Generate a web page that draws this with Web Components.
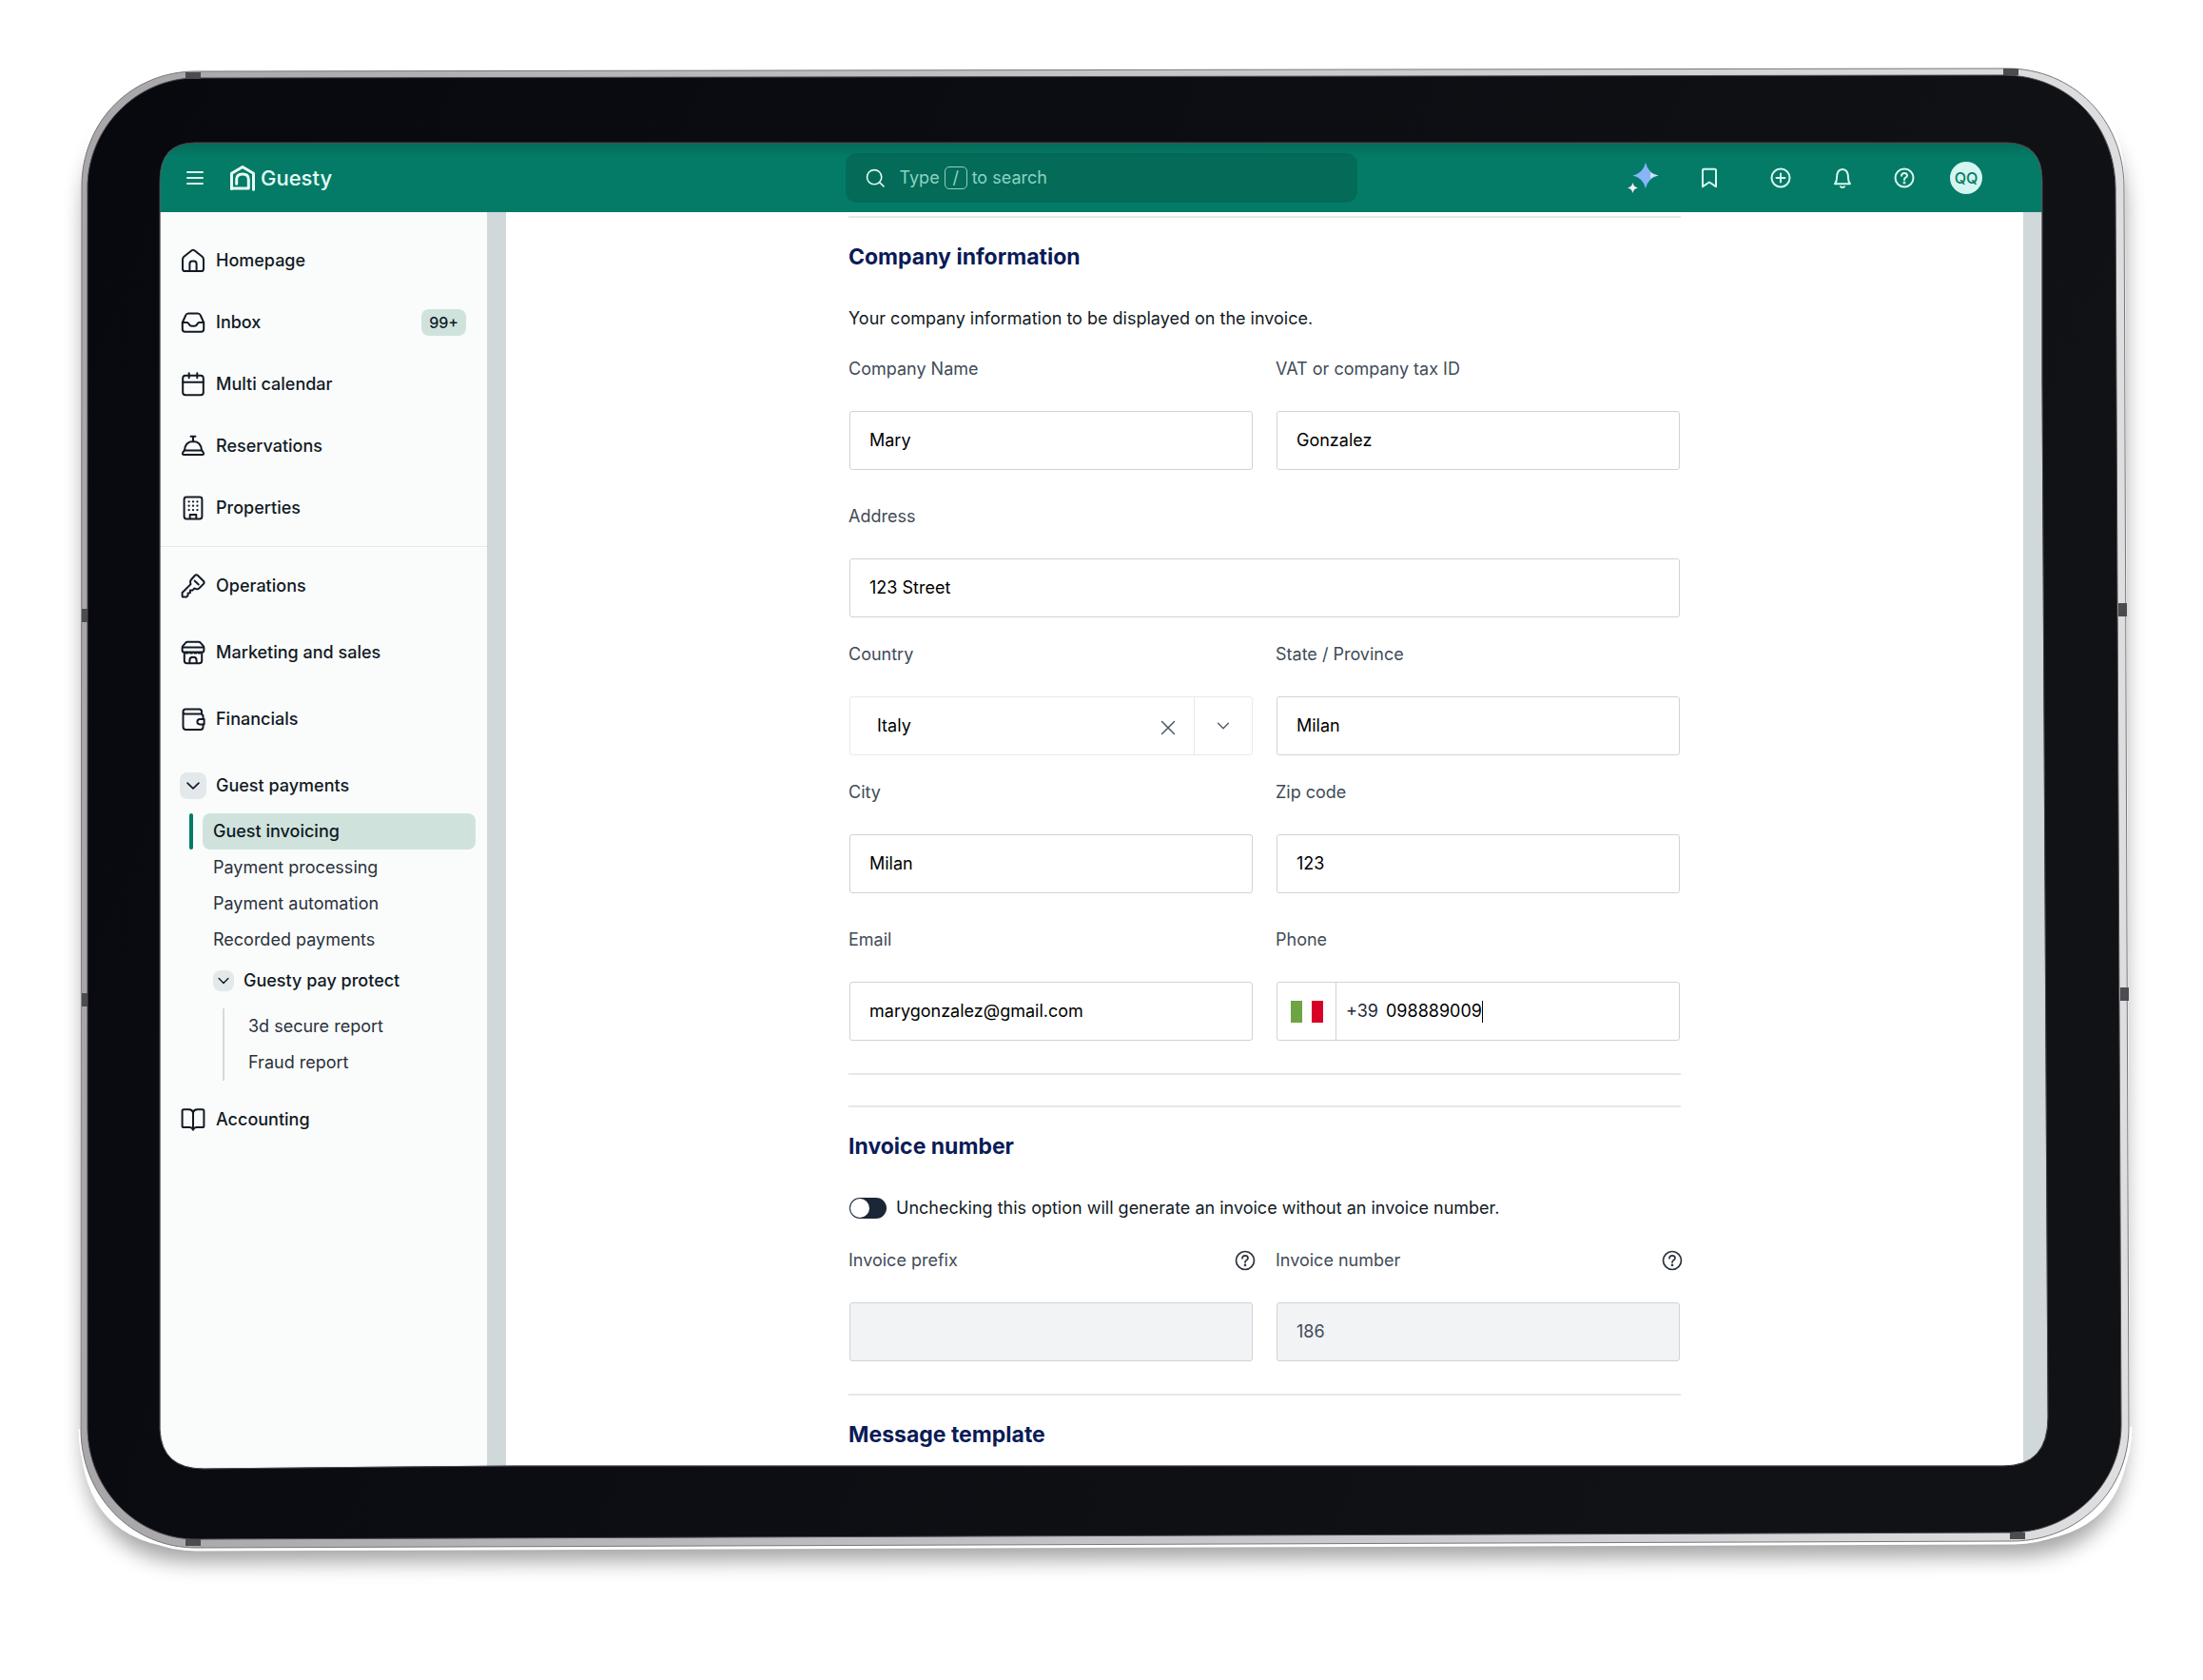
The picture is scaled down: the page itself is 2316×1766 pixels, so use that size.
<!DOCTYPE html>
<html lang="en">
<head>
<meta charset="utf-8">
<meta name="viewport" content="width=device-width, initial-scale=1">
<title>Guesty - Guest invoicing</title>
<style>
	html, body {
		margin: 0;
		height: 100%;
		background: #fff;
	}
	body {
		font-family: Inter, "Liberation Sans", sans-serif;
		font-size: 18px;
		line-height: 28px;
		color: #111a24;
		--green: #047b66;
		--mint: #cfe3dc;
		--line: #e5e7ea;
		--field-line: #d0d3d6;
		--track: #d1d8da;
	}
</style>
</head>
<body>

<tablet-frame>
	<app-header slot="screen"></app-header>

	<side-nav slot="screen">
		<nav-item icon="home">Homepage</nav-item>
		<nav-item icon="inbox" badge="99+">Inbox</nav-item>
		<nav-item icon="calendar">Multi calendar</nav-item>
		<nav-item icon="bell-desk">Reservations</nav-item>
		<nav-item icon="building">Properties</nav-item>
		<nav-item slot="tools" icon="key">Operations</nav-item>
		<nav-item slot="tools" icon="store">Marketing and sales</nav-item>
		<nav-item slot="tools" icon="wallet">Financials</nav-item>
		<nav-group slot="tools" label="Guest payments">
			<nav-link active>Guest invoicing</nav-link>
			<nav-link>Payment processing</nav-link>
			<nav-link>Payment automation</nav-link>
			<nav-link>Recorded payments</nav-link>
			<nav-group nested label="Guesty pay protect">
				<nav-link>3d secure report</nav-link>
				<nav-link>Fraud report</nav-link>
			</nav-group>
		</nav-group>
		<nav-item slot="tools" icon="book">Accounting</nav-item>
	</side-nav>

	<invoice-page slot="screen">
		<form-section heading="Company information">
			<p>Your company information to be displayed on the invoice.</p>
			<field-row>
				<text-field label="Company Name" value="Mary"></text-field>
				<text-field label="VAT or company tax ID" value="Gonzalez"></text-field>
			</field-row>
			<field-row space="wide">
				<text-field label="Address" value="123 Street"></text-field>
			</field-row>
			<field-row space="narrow">
				<select-field label="Country" value="Italy"></select-field>
				<text-field label="State / Province" value="Milan"></text-field>
			</field-row>
			<field-row space="narrow">
				<text-field label="City" value="Milan"></text-field>
				<text-field label="Zip code" value="123"></text-field>
			</field-row>
			<field-row space="wide">
				<text-field label="Email" type="email" value="marygonzalez@gmail.com"></text-field>
				<phone-field label="Phone" prefix="+39" value="098889009"></phone-field>
			</field-row>
		</form-section>
		<form-section heading="Invoice number" spaced>
			<toggle-switch>Unchecking this option will generate an invoice without an invoice number.</toggle-switch>
			<field-row>
				<text-field label="Invoice prefix" value="" help disabled></text-field>
				<text-field label="Invoice number" value="186" help disabled></text-field>
			</field-row>
		</form-section>
		<form-section heading="Message template"></form-section>
	</invoice-page>
</tablet-frame>

<script>
/**
 * Icon shapes, drawn on a 26 x 26 grid.
 */
const ICONS = {
	'menu': '<path d="M5 7h16M5 13h16M5 19h16"/>',
	'home': '<path d="M11.6 2.300 3.400 8.800Q2 10 2 12v9.400Q2 24 4.600 24h16.800q2.600 0 2.600-2.600V12q0-2-1.400-3.200l-8.200-6.500q-1.400-1-2.800 0Z"/><path d="M9.400 24v-7.600q0-2.900 2.600-2.900h2q2.600 0 2.600 2.900V24"/>',
	'inbox': '<path d="M1.800 13v7q0 2.700 2.700 2.700h17q2.700 0 2.700-2.700v-7L20.800 5.500q-.8-2-2.900-2H8.100q-2.100 0-2.900 2Z"/><path d="M1.800 13h4.700q1.300 0 2 1.500 1 2.200 3 2.200h3q2 0 3-2.200.7-1.500 2-1.500h4.700"/>',
	'calendar': '<rect x="2.200" y="3.800" width="21.600" height="20.400" rx="2.800"/><path d="M2.200 10.800h21.600M8.700 1.200v5M17.300 1.200v5"/>',
	'bell-desk': '<path d="M3.600 17.400h18.800l1.500 2.600q.8 2-1.400 2H3.500q-2.200 0-1.400-2Z"/><path d="M4 17.400q.6-9.200 9-9.400 8.400.2 9 9.400M13 8V3M10.600 2.800h4.800"/>',
	'building': '<rect x="3.600" y="1.500" width="18.800" height="23" rx="2.400"/><path d="M9.700 24v-4h6.600v4"/><path stroke-width="2.200" d="M8.600 6.300h.1M13 6.300h.1M17.400 6.300h.1M8.600 10.700h.1M13 10.700h.1M17.400 10.700h.1M8.600 15.100h.1M13 15.100h.1M17.400 15.100h.1"/>',
	'key': '<path d="M14.800 2q1.600-1.400 3.200 0l5.900 5.700q1.400 1.600 0 3.200l-4.700 4.600q-1.400 1.300-3.200.6l-1.600-.7-2 2.200-2.400-.1-.1 2.700-2.300.2-.1 2.600-1.500 1.600H2.800q-1.200 0-1.200-1.200v-3.400l8.900-8.900-.4-1.800q-.4-1.600.8-2.800Z"/><path d="m14.600 7.600 4.200 3.800"/>',
	'store': '<path d="M7.300 1.800h11.400q1.400 0 2.300 1l2.600 3q.8 1 .8 2.200v2.400q0 2.200-2.600 2.200H4.200q-2.600 0-2.600-2.200V8q0-1.200.8-2.200l2.600-3q.9-1 2.300-1Z"/><path d="M2.200 7.600h21.600M3.800 13v8.400q0 2.800 2.800 2.800h12.800q2.800 0 2.800-2.800V13"/><path d="M9.400 24v-3q0-3.200 3.600-3.200t3.600 3.200v3"/><path d="M5.600 13.400h2M10 13.400h2M14.400 13.400h2M18.600 13.400h1.600"/>',
	'wallet': '<path d="M22 7.500V5q0-2.500-2.500-2.500H5Q2.500 2.500 2.500 5v15.800Q2.500 24 5.600 24h15.200q2.700 0 2.700-2.700v-2.800M23.500 13v-3q0-2.500-2.500-2.500H5Q2.500 7.500 2.500 5"/><path d="M24.600 13h-4.400q-2.800.2-2.800 2.700t2.800 2.700h4.400Z"/>',
	'book': '<path d="M13 5.600Q12.200 2.200 8.600 2.200H3.200q-1.600 0-1.600 1.600v15.600q0 1.600 1.600 1.600h6q3 0 3.800 2.800.8-2.800 3.800-2.800h6q1.600 0 1.600-1.600V3.800q0-1.600-1.600-1.600h-5.400Q13.800 2.200 13 5.600Zm0 0v18.200"/>',
	'chevron': '<path d="m6 9.500 7 7 7-7"/>',
	'search': '<circle cx="12" cy="12" r="9"/><path d="m18.600 18.600 5 5"/>',
	'bookmark': '<path d="M6 5q0-1.300 1.300-1.300h11.400Q20 3.700 20 5v17.200l-7-4.700-7 4.700Z"/>',
	'plus': '<circle cx="13" cy="13" r="9.500"/><path d="M13 8.500v9M8.500 13h9"/>',
	'bell': '<path d="M5 19.300h16q-2-2.500-2-6 0-9.300-6-9.300t-6 9.300q0 3.500-2 6Z"/><path d="M11 22.300q2 1.500 4 0"/>',
	'help': '<circle cx="13" cy="13" r="9.500"/><path d="M10 10.800q.2-2.900 3-2.900t3 2.500q0 1.500-1.600 2.300Q13 13.400 13 15"/><circle cx="13" cy="17.900" r=".5" fill="currentColor"/>',
	'close': '<path d="m6 6 14 14M20 6 6 20"/>',
	'logo': '<path d="M1.500 24.500V8.300L13 1.500l11.500 6.800v17"/><path d="M1.500 24h17.800v-9.500q0-5.600-6.300-5.600t-6.300 5.600v4.800"/>',
	'sparkle': '<g stroke="none"><path fill="#8ab4f8" d="M16-3q2.600 11 13.500 13.500Q18.600 13 16 24q-2.600-11-13.500-13.500Q13.400 8 16-3Z"/><path fill="#cfe6f7" d="M21 7.600q3.400 2.100 8.500 2.900-5.100.8-8.500 2.900Z"/><path fill="#f4eef8" d="M2.500 18q.9 4.600 5.500 5.500-4.600.9-5.500 5.500-.9-4.600-5.500-5.500 4.600-.9 5.500-5.500Z"/></g>'
};

/**
 * Shared base: opens a shadow root and fills it from render().
 */
class BaseElement extends HTMLElement {
	constructor() {
		super();
		this.shadow = this.attachShadow({ mode: 'open' });
	}

	connectedCallback() {
		this.shadow.innerHTML = this.render();
	}

	/**
	 * @param {string} name
	 * @returns {string} attribute value or empty string
	 */
	attr(name) {
		return this.getAttribute(name) || '';
	}
}

class AppIcon extends BaseElement {
	render() {
		return `
    <style>
        :host {
          display: block;
          flex: none;
          width: var(--size, 26px);
          height: var(--size, 26px);
        }
        svg {
          display: block;
          width: 100%;
          height: 100%;
          overflow: visible;
          fill: none;
          stroke: currentColor;
          stroke-width: var(--stroke, 2);
          stroke-linecap: round;
          stroke-linejoin: round;
        }
    </style>
    <svg viewBox="0 0 26 26" aria-hidden="true">${ICONS[this.attr('name')] || ''}</svg>`;
	}
}

/**
 * Tablet body drawn over the edges of the screen area.
 */
class TabletFrame extends BaseElement {
	render() {
		return `
    <style>
        :host {
          display: grid;
          position: relative;
          box-sizing: border-box;
          min-height: 100vh;
          padding: 150px 163px 222px 168px;
        }
        .screen {
          display: grid;
          grid-template: 73px 1fr / 344px 1fr;
          min-height: 0;
          height: calc(100vh - 372px);
          overflow: hidden;
          background: #fff;
        }
        svg {
          position: absolute;
          inset: 0;
          width: 100%;
          height: 100%;
          pointer-events: none;
        }
    </style>
    <div class="screen"><slot name="screen"></slot></div>
    <svg viewBox="0 0 2316 1766" preserveAspectRatio="none" aria-hidden="true">
      <defs>
        <filter id="shade" x="-5%" y="-5%" width="110%" height="112%">
          <feGaussianBlur stdDeviation="11"/>
        </filter>
        <linearGradient id="rim" x1="0" x2="1">
          <stop offset="0" stop-color="#a9a6aa"/>
          <stop offset=".5" stop-color="#c6c4c8"/>
          <stop offset="1" stop-color="#dedde0"/>
        </linearGradient>
        <linearGradient id="glass" x1="0" x2="1" y2=".3">
          <stop offset="0" stop-color="#07090f"/>
          <stop offset="1" stop-color="#111216"/>
        </linearGradient>
        <linearGradient id="fade" x1="0" x2="0" y1="0" y2="1">
          <stop offset="0" stop-opacity=".13"/>
          <stop offset="1" stop-opacity="0"/>
        </linearGradient>
        <clipPath id="outside">
          <path clip-rule="evenodd" d="M0 0H2316V1766H0ZM206 76 2110 73Q2232 73 2234 195L2239 1500Q2239 1620 2117 1621L206 1628Q84 1628 84 1502L86 196Q86 76 206 76Z"/>
        </clipPath>
      </defs>
      <g clip-path="url(#outside)">
        <path fill="#000" opacity=".36" filter="url(#shade)" d="M210 110H2110Q2232 110 2234 220V1515Q2234 1635 2114 1636L206 1642Q88 1642 88 1512V230Q88 110 210 110Z"/>
      </g>
      <path fill="none" stroke="#fff" stroke-width="3" d="M84 1502C84 1573 138 1629 206 1629L2117 1622C2187 1621 2240 1567 2240 1500"/>
      <path fill="url(#rim)" fill-rule="evenodd" stroke="#77767a" stroke-width="1" d="M206 75 2110 72C2180 72 2232 126 2233 195L2238 1500C2238 1566 2186 1619 2117 1620L206 1627C138 1627 85 1572 85 1502L86 196C86 128 138 75 206 75ZM205 150Q168 150 168 190V1503Q170 1544 214 1544L420 1542 540 1541H2106Q2153 1541 2153 1490L2147 400V190Q2147 150 2109 150Z"/>
      <path fill="url(#glass)" fill-rule="evenodd" stroke="#4a494d" stroke-width="1" d="M206 82 2108 79C2174 80 2223 130 2224 197L2230 1498C2230 1560 2178 1610 2115 1611L206 1618C144 1618 92 1566 92 1500V198C92 134 144 82 206 82ZM205 150Q168 150 168 190V1503Q170 1544 214 1544L420 1542 540 1541H2106Q2153 1541 2153 1490L2147 400V190Q2147 150 2109 150Z"/>
      <path fill="url(#fade)" d="M205 150H2109Q2128 150 2137 160V166H177V160Q186 150 205 150Z"/>
      <path fill="#4c4b4f" d="M195 76h16v7h-16ZM2106 72h16v7h-16ZM195 1618h16v7h-16ZM2113 1611h16v7h-16ZM86 640h6v14h-6ZM86 1044h6v14h-6ZM2227 634h9v14h-9ZM2229 1038h9v14h-9Z"/>
    </svg>`;
	}
}

class AppHeader extends BaseElement {
	render() {
		return `
    <style>
        :host {
          display: block;
          grid-column: 1 / -1;
          background: var(--green);
          color: #d9f7ef;
        }
        header {
          display: flex;
          align-items: center;
          box-sizing: border-box;
          height: 100%;
          padding-right: 6px;
        }
        .brand, .actions {
          flex: 1 1 0;
          display: flex;
          align-items: center;
        }
        .brand {
          gap: 24px;
        }
        .brand::before {
          content: "";
        }
        .actions {
          justify-content: flex-end;
          gap: 31px;
        }
        .actions::after {
          content: "";
          width: 32px;
        }
        button {
          display: flex;
          justify-content: center;
          width: 34px;
          padding: 0;
          border: 0;
          background: none;
          color: inherit;
        }
        button.menu {
          width: 26px;
        }
        button.spark {
          margin-right: 5px;
        }
        button.mark {
          margin-right: 10px;
        }
        button.user {
          align-items: center;
          height: 34px;
          border-radius: 50%;
          background: #d5f5f0;
          color: var(--green);
          font: 500 16px/34px Inter, sans-serif;
        }
        a {
          display: flex;
          align-items: center;
          gap: 6px;
          color: #e6fbf6;
          font-size: 22px;
          font-weight: 500;
          text-decoration: none;
          --stroke: 3;
        }
        label {
          flex: 0 1 538px;
          display: flex;
          align-items: center;
          box-sizing: border-box;
          height: 52px;
          padding: 0 20px;
          border-radius: 12px;
          background: #036b58;
          color: #8bd3c2;
        }
        label app-icon {
          --size: 22px;
          margin-right: 15px;
          color: #d9f7ef;
        }
        kbd {
          box-sizing: border-box;
          width: 24px;
          margin: 0 5px;
          border: 1px solid #8bd3c2;
          border-radius: 5px;
          font: inherit;
          line-height: 22px;
          text-align: center;
        }
        input {
          flex: 1;
          min-width: 0;
          border: 0;
          outline: 0;
          background: none;
          color: inherit;
          font: inherit;
        }
    </style>
    <header>
      <div class="brand">
        <button class="menu" type="button" aria-label="Menu"><app-icon name="menu"></app-icon></button>
        <a href="#"><app-icon name="logo"></app-icon>Guesty</a>
      </div>
      <label>
        <app-icon name="search"></app-icon>
        <span>Type</span><kbd>/</kbd><span>to search</span>
        <input type="search">
      </label>
      <div class="actions">
        <button class="spark" type="button" aria-label="Assistant"><app-icon name="sparkle"></app-icon></button>
        <button class="mark" type="button" aria-label="Bookmarks"><app-icon name="bookmark"></app-icon></button>
        <button type="button" aria-label="Add"><app-icon name="plus"></app-icon></button>
        <button type="button" aria-label="Notifications"><app-icon name="bell"></app-icon></button>
        <button type="button" aria-label="Help"><app-icon name="help"></app-icon></button>
        <button class="user" type="button">QQ</button>
      </div>
    </header>`;
	}
}

class SideNav extends BaseElement {
	render() {
		return `
    <style>
        :host {
          display: block;
          min-height: 0;
          overflow: hidden;
          background: #fafbfb;
        }
        .main {
          padding: 18px 0 8px;
          border-bottom: 1px solid var(--line);
          --row: 65px;
        }
        .tools {
          display: flex;
          flex-direction: column;
          gap: 12px;
          padding-top: 12px;
          --row: 58px;
        }
    </style>
    <nav>
      <div class="main"><slot></slot></div>
      <div class="tools"><slot name="tools"></slot></div>
    </nav>`;
	}
}

class NavItem extends BaseElement {
	render() {
		const badge = this.attr('badge');
		return `
    <style>
        :host {
          display: block;
        }
        a {
          display: flex;
          align-items: center;
          gap: 11px;
          height: var(--row);
          padding: 0 22px;
          color: inherit;
          font-weight: 500;
          text-decoration: none;
        }
        .badge {
          margin-left: auto;
          padding: 0 8px;
          border-radius: 8px;
          background: var(--mint);
          font-size: 16px;
        }
    </style>
    <a href="#">
      <app-icon name="${this.attr('icon')}"></app-icon>
      <slot></slot>
      ${badge ? `<span class="badge">${badge}</span>` : ''}
    </a>`;
	}
}

class NavLink extends BaseElement {
	render() {
		return `
    <style>
        :host {
          display: flex;
          gap: 10px;
          height: 38px;
        }
        :host::before {
          content: "";
          width: 4px;
          border-radius: 2px;
        }
        :host([active])::before {
          background: var(--green);
        }
        a {
          flex: 1;
          padding-left: 11px;
          border-radius: 8px;
          color: #2a323c;
          line-height: 38px;
          text-decoration: none;
        }
        :host([active]) a {
          background: var(--mint);
          color: #111a24;
          font-weight: 500;
        }
    </style>
    <a href="#"><slot></slot></a>`;
	}
}

class NavGroup extends BaseElement {
	render() {
		return `
    <style>
        :host {
          display: block;
        }
        button {
          display: flex;
          align-items: center;
          gap: 10px;
          height: var(--row);
          padding: 0 21px;
          border: 0;
          background: none;
          color: inherit;
          font: inherit;
          font-weight: 500;
        }
        .chip {
          padding: 3px;
          border-radius: 8px;
          background: #e3e9ea;
          --size: 22px;
        }
        .list {
          padding: 0 12px 0 31px;
        }
        :host([nested]) button {
          height: 48px;
          padding: 0 25px;
        }
        :host([nested]) .chip {
          padding: 2px;
          --size: 18px;
        }
        /* the rule takes the place of the links' own marker column */
        :host([nested]) .list {
          margin: 5px 0 0 35px;
          padding: 0;
          border-left: 2px solid #d5dadb;
        }
    </style>
    <button type="button" aria-expanded="true">
      <span class="chip"><app-icon name="chevron"></app-icon></span>${this.attr('label')}
    </button>
    <div class="list"><slot></slot></div>`;
	}
}

class InvoicePage extends BaseElement {
	render() {
		return `
    <style>
        :host {
          display: flex;
          min-width: 0;
          min-height: 0;
          overflow: hidden;
          border: solid var(--track);
          border-width: 0 26px 0 20px;
        }
        form {
          flex: 0 1 875px;
          margin: 4px auto 0;
        }
    </style>
    <form><slot></slot></form>`;
	}
}

class FormSection extends BaseElement {
	render() {
		return `
    <style>
        :host {
          display: block;
          padding-bottom: 34px;
          border-top: 2px solid var(--line);
        }
        :host([spaced]) {
          border-top: 0;
        }
        :host([spaced])::before {
          content: "";
          display: block;
          height: 32px;
          border: solid var(--line);
          border-width: 2px 0;
        }
        h2 {
          margin: 25px 0 35px;
          color: #0a1b57;
          font-size: 23px;
          font-weight: 700;
          line-height: 32px;
        }
        ::slotted(p) {
          margin: 0 0 25px;
        }
        ::slotted(toggle-switch) {
          margin-bottom: 27px;
        }
    </style>
    <h2>${this.attr('heading')}</h2>
    <slot></slot>`;
	}
}

class FieldRow extends BaseElement {
	render() {
		return `
    <style>
        :host {
          display: flex;
          gap: 23px;
        }
        :host([space="narrow"]) {
          margin-top: 25px;
        }
        :host([space="wide"]) {
          margin-top: 35px;
        }
        ::slotted(*) {
          flex: 1;
          min-width: 0;
        }
    </style>
    <slot></slot>`;
	}
}

/**
 * Label over a bordered box. Subclasses supply the control.
 */
class TextField extends BaseElement {
	control() {
		const type = this.attr('type') || 'text';
		const disabled = this.hasAttribute('disabled') ? 'disabled' : '';
		return `<input id="control" type="${type}" value="${this.attr('value')}" ${disabled}>`;
	}

	extraStyle() {
		return '';
	}

	render() {
		return `
    <style>
        :host {
          display: block;
        }
        .head {
          display: flex;
          justify-content: space-between;
          align-items: center;
          margin-bottom: 30px;
          color: #414b57;
        }
        .help {
          margin-right: -4px;
          padding: 0;
          border: 0;
          background: none;
          color: #2a323c;
          --stroke: 1.7;
        }
        .box {
          display: flex;
          box-sizing: border-box;
          height: 62px;
          margin: 0 1px;
          border: 1px solid var(--field-line);
          border-radius: 3px;
          background: #fff;
          overflow: hidden;
        }
        :host([disabled]) .box {
          background: #f1f3f5;
        }
        input, select {
          flex: 1;
          min-width: 0;
          padding: 0 20px;
          border: 0;
          outline: 0;
          background: none;
          color: #000;
          font: inherit;
          appearance: none;
        }
        input:disabled {
          color: #414b57;
        }
        ${this.extraStyle()}
    </style>
    <div class="head">
      <label for="control">${this.attr('label')}</label>
      ${this.hasAttribute('help') ? '<button class="help" type="button" aria-label="Help"><app-icon name="help"></app-icon></button>' : ''}
    </div>
    <div class="box">${this.control()}</div>`;
	}
}

class SelectField extends TextField {
	extraStyle() {
		return `
        .box {
          border-color: #e8eaec;
        }
        select {
          padding: 0 28px;
        }
        .clear, .open {
          display: flex;
          align-items: center;
          justify-content: center;
          padding: 0;
          border: 0;
          background: none;
          color: #4b5563;
        }
        .clear {
          width: 54px;
          padding-top: 4px;
          --size: 24px;
          --stroke: 1.6;
        }
        .open {
          width: 61px;
          border-left: 1px solid #e8eaec;
          --size: 20px;
          --stroke: 1.7;
        }`;
	}

	control() {
		return `<select id="control"><option>${this.attr('value')}</option></select>
      <button class="clear" type="button" aria-label="Clear"><app-icon name="close"></app-icon></button>
      <button class="open" type="button" aria-label="Open list"><app-icon name="chevron"></app-icon></button>`;
	}
}

class PhoneField extends TextField {
	extraStyle() {
		return `
        .box {
          align-items: center;
        }
        .country {
          align-self: stretch;
          display: flex;
          align-items: center;
          justify-content: center;
          width: 62px;
          padding: 0;
          border: 0;
          border-right: 1px solid var(--field-line);
          background: none;
        }
        .country svg {
          width: 34px;
          height: 23px;
        }
        .prefix {
          margin: 0 8px 0 10px;
          color: #1f2937;
        }
        input {
          flex: none;
          padding: 0;
          field-sizing: content;
        }
        .caret {
          width: 1px;
          height: 23px;
          background: #000;
        }`;
	}

	control() {
		return `<button class="country" type="button" aria-label="Italy">
        <svg viewBox="0 0 34 23"><path fill="#6da544" d="M0 0h12v23H0Z"/><path fill="#d80027" d="M22 0h12v23H22Z"/></svg>
      </button>
      <span class="prefix">${this.attr('prefix')}</span>
      <input id="control" type="tel" value="${this.attr('value')}"><span class="caret"></span>`;
	}
}

class ToggleSwitch extends BaseElement {
	render() {
		return `
    <style>
        :host {
          display: block;
        }
        label {
          display: flex;
          align-items: center;
          gap: 10px;
        }
        input {
          appearance: none;
          box-sizing: border-box;
          width: 39px;
          height: 22px;
          margin: 0 0 0 1px;
          border-radius: 11px;
          background: #1b2736;
        }
        input::before {
          content: "";
          display: block;
          width: 20px;
          height: 20px;
          margin: 1px;
          border-radius: 50%;
          background: #fff;
        }
    </style>
    <label><input type="checkbox" role="switch"><slot></slot></label>`;
	}
}

window.customElements.define('app-icon', AppIcon);
window.customElements.define('tablet-frame', TabletFrame);
window.customElements.define('app-header', AppHeader);
window.customElements.define('side-nav', SideNav);
window.customElements.define('nav-item', NavItem);
window.customElements.define('nav-link', NavLink);
window.customElements.define('nav-group', NavGroup);
window.customElements.define('invoice-page', InvoicePage);
window.customElements.define('form-section', FormSection);
window.customElements.define('field-row', FieldRow);
window.customElements.define('text-field', TextField);
window.customElements.define('select-field', SelectField);
window.customElements.define('phone-field', PhoneField);
window.customElements.define('toggle-switch', ToggleSwitch);
</script>
</body>
</html>
